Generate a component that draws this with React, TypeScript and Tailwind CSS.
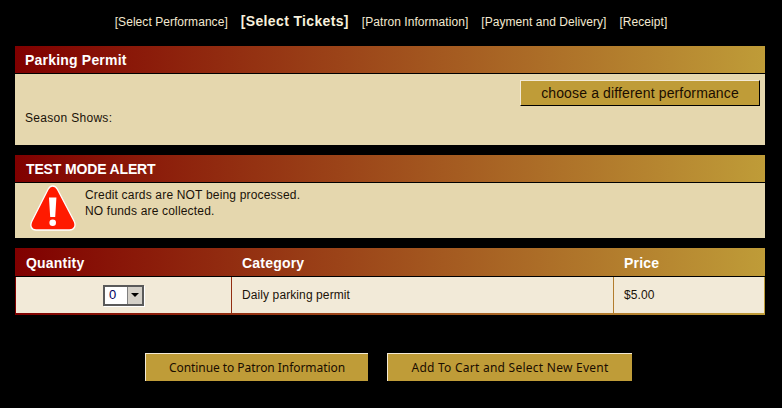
import React from 'react';

const steps = ['Select Performance', 'Select Tickets', 'Patron Information', 'Payment and Delivery', 'Receipt'];

const headerBg = 'bg-[linear-gradient(90deg,#800000_0%,#bf9c38_100%)]';

const PanelHeader = ({ title, className }: { title: string; className: string }) => (
    <div className={`h-[28px] border-b border-black pt-[2px] flex items-center text-[14px] font-bold text-white ${headerBg} ${className}`}>
        {title}
    </div>
);

const GoldButton = ({ label, className }: { label: string; className: string }) => (
    <button className={`bg-[#bf9c38] text-[#1a0d00] border-t border-l border-t-[#f3ead6] border-l-[#f3ead6] ${className}`}>
        {label}
    </button>
);

const AlertIcon = () => (
    <svg width="46" height="46" viewBox="0 0 46 46">
        <path d="M22.7 1 C25 1 26.5 2.5 27.5 4.5 L44 36 C46.5 41 44 45 39.5 45 L6 45 C1.5 45 -0.5 41 2 36 L18 4.5 C19 2.5 20.5 1 22.7 1 Z" fill="#ff1a00" stroke="#ffffff" strokeWidth="1.3" />
        <path d="M19 12.5 L26.4 12.5 L25.2 32 L20.2 32 Z" fill="#ffffff" />
        <circle cx="22.7" cy="37.7" r="3.3" fill="#ffffff" />
    </svg>
);

const App = () => {
    return (
        <div className="w-[782px] h-[408px] bg-black overflow-hidden font-['Liberation_Sans',Arial,sans-serif] text-[12px] text-[#1a1208]">
            {/* Steps */}
            <div className="h-[46px] pb-[3px] flex items-center justify-center gap-[13px] text-[#f3e9d0] tracking-[0.05px]">
                {steps.map((step) => (
                    <span key={step} className={step === 'Select Tickets' ? 'text-[14px] font-bold text-[#f7f0dc] tracking-[0.35px]' : ''}>
                        [{step}]
                    </span>
                ))}
            </div>

            <div className="mx-[15px] w-[750px] flex flex-col gap-[10px]">
                {/* Permit */}
                <section className="bg-[#e5d7ae]">
                    <PanelHeader title="Parking Permit" className="pl-[10px] tracking-[0.2px]" />
                    <div className="h-[71px] pl-[10px] pr-[5px] pt-[6px]">
                        <div className="flex justify-end">
                            <GoldButton
                                label="choose a different performance"
                                className="w-[240px] h-[26px] text-[14px] tracking-[0.14px] border-r border-b border-r-black border-b-black"
                            />
                        </div>
                        <p className="mt-[3px] tracking-[0.3px]">Season Shows:</p>
                    </div>
                </section>

                {/* Test mode */}
                <section className="bg-[#e5d7ae]">
                    <PanelHeader title="TEST MODE ALERT" className="pl-[11px] tracking-[-0.15px]" />
                    <div className="h-[55px] flex pl-[15px] pt-[2px] gap-[9px]">
                        <AlertIcon />
                        <p className="leading-[16px] pt-[2px] tracking-[0.18px]">
                            Credit cards are NOT being processed.
                            <br />
                            NO funds are collected.
                        </p>
                    </div>
                </section>

                {/* Tickets */}
                <section className={headerBg}>
                    <div className="grid grid-cols-[216px_382px_1fr] h-[29px] pt-[2px] border-b border-black items-center text-[14px] font-bold text-white tracking-[0.2px]">
                        <span className="pl-[11px]">Quantity</span>
                        <span className="pl-[11px]">Category</span>
                        <span className="pl-[11px]">Price</span>
                    </div>
                    <div className="p-px pt-0">
                        <div className="grid grid-cols-[215px_381px_1fr] gap-x-px h-[36px] items-stretch">
                            <div className="bg-[#f2ead8] flex items-center justify-center">
                                <div className="w-[41px] h-[21px] border-2 border-[#5a5a5a] shadow-[1px_1px_0_#ffffff] bg-white flex items-stretch justify-between">
                                    <span className="pl-[4px] self-center text-[#000060] text-[13px]">0</span>
                                    <span className="w-[15px] bg-[#d4d0c8] border-l border-[#808080] flex items-center justify-center">
                                        <span className="w-0 h-0 border-x-[4px] border-x-transparent border-t-[4px] border-t-black" />
                                    </span>
                                </div>
                            </div>
                            <div className="bg-[#f2ead8] flex items-center pl-[10px] tracking-[0.1px]">Daily parking permit</div>
                            <div className="bg-[#f2ead8] flex items-center pl-[10px] tracking-[0.1px]">$5.00</div>
                        </div>
                        <div className="h-px" />
                    </div>
                </section>
            </div>

            {/* Actions */}
            <div className="mt-[38px] pl-[145px] flex gap-[19px] font-['Noto_Sans',Tahoma,sans-serif]">
                <GoldButton label="Continue to Patron Information" className="w-[223px] h-[28px] text-[12px] tracking-[-0.06px]" />
                <GoldButton label="Add To Cart and Select New Event" className="w-[245px] h-[28px] text-[12px] tracking-[0.25px]" />
            </div>
        </div>
    );
};

export default App;
